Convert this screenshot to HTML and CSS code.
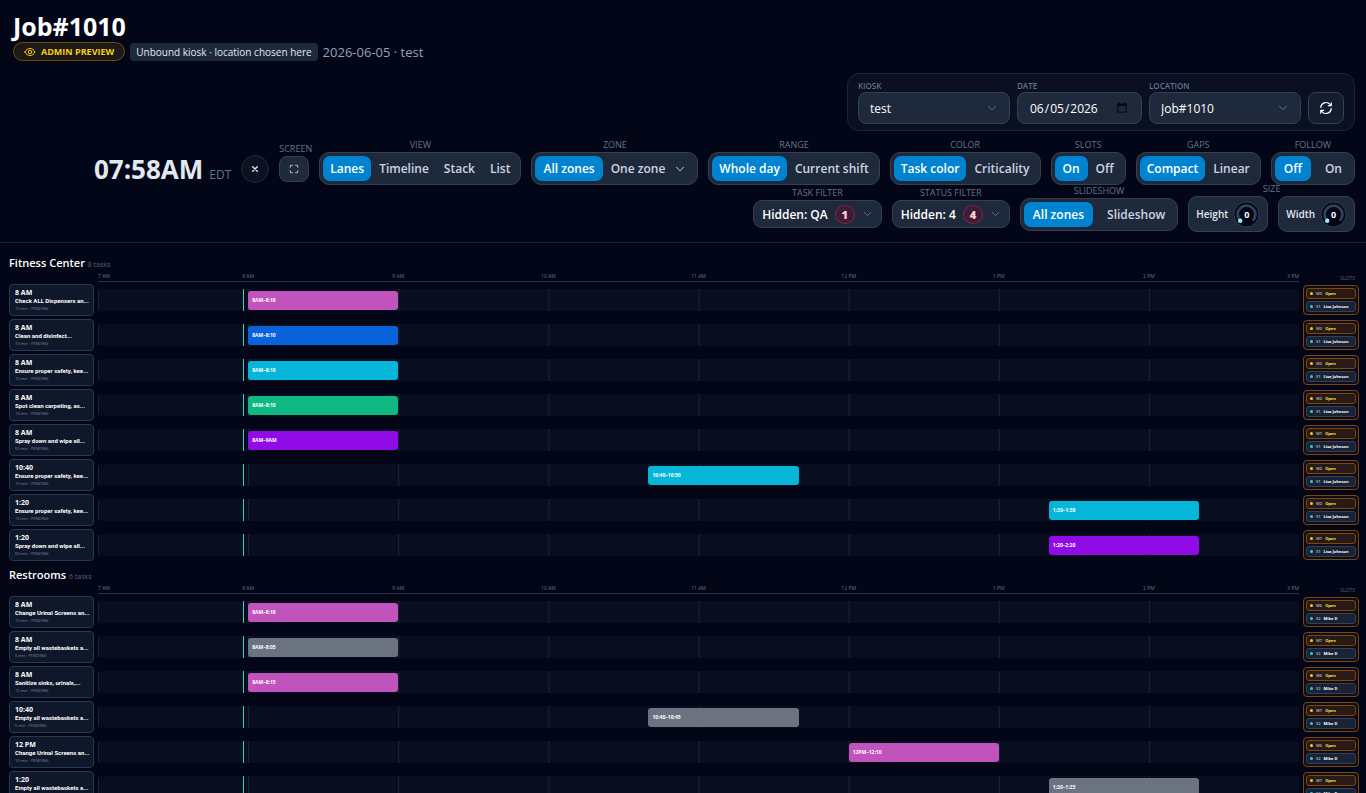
FILE: index.html
```html
<!DOCTYPE html>
<html lang="en">
<head>
    <meta charset="UTF-8">
    <meta name="viewport" content="width=device-width, initial-scale=1.0">
    <title>Job#1010 - Kiosk</title>
    <link rel="stylesheet" href="styles.css">
</head>
<body>

<header class="top">
    <h1>Job#1010</h1>
    <div class="meta">
        <span class="preview">
            <svg class="icon" viewBox="0 0 24 24"><path d="M2 12c2-4.500 6-7 10-7s8 2.500 10 7c-2 4.500-6 7-10 7s-8-2.500-10-7z"/><circle cx="12" cy="12" r="3.500"/></svg>
            ADMIN PREVIEW
        </span>
        <span class="tag">Unbound kiosk · location chosen here</span>
        <span class="when">2026-06-05 · test</span>
    </div>

    <form class="picker">
        <div class="field">
            <label for="kiosk">KIOSK</label>
            <div class="select">
                <select id="kiosk"><option>test</option></select>
                <svg class="icon" viewBox="0 0 24 24"><path d="M5 8.500l7 7 7-7"/></svg>
            </div>
        </div>
        <div class="field field-date">
            <label for="date">DATE</label>
            <input type="date" id="date" value="2026-06-05">
        </div>
        <div class="field">
            <label for="location">LOCATION</label>
            <div class="select">
                <select id="location"><option>Job#1010</option></select>
                <svg class="icon" viewBox="0 0 24 24"><path d="M5 8.500l7 7 7-7"/></svg>
            </div>
        </div>
        <button type="button" class="refresh" aria-label="Refresh">
            <svg class="icon" viewBox="0 0 24 24"><path d="M3 11a9 9 0 0 1 15.500-5.500L21 8M21 3v5h-5M21 13a9 9 0 0 1-15.500 5.500L3 16M3 21v-5h5"/></svg>
        </button>
    </form>

    <div class="toolbar">
        <div class="clock">07:58AM <small>EDT</small></div>
        <button class="close" aria-label="Close">
            <svg class="icon" viewBox="0 0 24 24"><path d="M5 5l14 14M19 5L5 19"/></svg>
        </button>
        <div class="group group-screen">
            <span class="caption">SCREEN</span>
            <button class="screen" aria-label="Full screen">
                <svg class="icon" viewBox="0 0 24 24"><path d="M3 8V5a2 2 0 0 1 2-2h3M16 3h3a2 2 0 0 1 2 2v3M21 16v3a2 2 0 0 1-2 2h-3M8 21H5a2 2 0 0 1-2-2v-3"/></svg>
            </button>
        </div>
        <div class="group">
            <span class="caption">VIEW</span>
            <div class="seg seg-tight"><button class="on">Lanes</button><button>Timeline</button><button>Stack</button><button>List</button></div>
        </div>
        <div class="group">
            <span class="caption">ZONE</span>
            <div class="seg">
                <button class="on">All zones</button>
                <button class="drop">One zone <svg class="icon" viewBox="0 0 24 24"><path d="M5 8.500l7 7 7-7"/></svg></button>
            </div>
        </div>
        <div class="group">
            <span class="caption">RANGE</span>
            <div class="seg seg-tight"><button class="on">Whole day</button><button>Current shift</button></div>
        </div>
        <div class="group">
            <span class="caption">COLOR</span>
            <div class="seg seg-tight"><button class="on">Task color</button><button>Criticality</button></div>
        </div>
        <div class="group">
            <span class="caption">SLOTS</span>
            <div class="seg"><button class="on">On</button><button>Off</button></div>
        </div>
        <div class="group">
            <span class="caption">GAPS</span>
            <div class="seg seg-tight"><button class="on">Compact</button><button>Linear</button></div>
        </div>
        <div class="group">
            <span class="caption">FOLLOW</span>
            <div class="seg seg-wide"><button class="on">Off</button><button>On</button></div>
        </div>
    </div>

    <div class="toolbar toolbar-second">
        <div class="group">
            <span class="caption">TASK FILTER</span>
            <button class="filter">Hidden: QA <b>1</b><svg class="icon" viewBox="0 0 24 24"><path d="M5 8.500l7 7 7-7"/></svg></button>
        </div>
        <div class="group">
            <span class="caption">STATUS FILTER</span>
            <button class="filter">Hidden: 4 <b>4</b><svg class="icon" viewBox="0 0 24 24"><path d="M5 8.500l7 7 7-7"/></svg></button>
        </div>
        <div class="group">
            <span class="caption">SLIDESHOW</span>
            <div class="seg seg-wide"><button class="on">All zones</button><button>Slideshow</button></div>
        </div>
        <div class="group">
            <span class="caption">SIZE</span>
            <div class="sizes">
                <label class="size">Height
                    <span class="knob">
                        <svg viewBox="0 0 28 28"><circle class="rim" cx="14" cy="14" r="13"/><path class="arc" d="M7.500 20.500a9.200 9.200 0 1 1 13 0"/><circle class="dot" cx="7.500" cy="20.500" r="2.300"/></svg>
                        <span>0</span>
                        <input type="range" min="0" max="10" value="0">
                    </span>
                </label>
                <label class="size">Width
                    <span class="knob">
                        <svg viewBox="0 0 28 28"><circle class="rim" cx="14" cy="14" r="13"/><path class="arc" d="M7.500 20.500a9.200 9.200 0 1 1 13 0"/><circle class="dot" cx="7.500" cy="20.500" r="2.300"/></svg>
                        <span>0</span>
                        <input type="range" min="0" max="10" value="0">
                    </span>
                </label>
            </div>
        </div>
    </div>
</header>

<main class="board">
    <section class="zone">
        <h2>Fitness Center <small>8 tasks</small></h2>
        <div class="lane lane-head">
            <div class="axis"><span>7 AM</span><span>8 AM</span><span>9 AM</span><span>10 AM</span><span>11 AM</span><span>12 PM</span><span>1 PM</span><span>2 PM</span><span>3 PM</span></div>
            <span class="slots-title">SLOTS</span>
        </div>
        <div class="lane">
            <div class="card"><b>8 AM</b><strong>Check ALL Dispensers an...</strong><small>10 min · PENDING</small></div>
            <div class="track"><div class="bar pink" style="margin-left: 12.5%">8AM–8:10</div></div>
            <div class="slots"><div class="slot open"><i>W3</i>Open</div><div class="slot"><i>S1</i>Lisa Johnson</div></div>
        </div>
        <div class="lane">
            <div class="card"><b>8 AM</b><strong>Clean and disinfect...</strong><small>10 min · PENDING</small></div>
            <div class="track"><div class="bar blue" style="margin-left: 12.5%">8AM–8:10</div></div>
            <div class="slots"><div class="slot open"><i>W3</i>Open</div><div class="slot"><i>S1</i>Lisa Johnson</div></div>
        </div>
        <div class="lane">
            <div class="card"><b>8 AM</b><strong>Ensure proper safety, kee...</strong><small>10 min · PENDING</small></div>
            <div class="track"><div class="bar cyan" style="margin-left: 12.5%">8AM–8:10</div></div>
            <div class="slots"><div class="slot open"><i>W2</i>Open</div><div class="slot"><i>S1</i>Lisa Johnson</div></div>
        </div>
        <div class="lane">
            <div class="card"><b>8 AM</b><strong>Spot clean carpeting, as...</strong><small>10 min · PENDING</small></div>
            <div class="track"><div class="bar green" style="margin-left: 12.5%">8AM–8:10</div></div>
            <div class="slots"><div class="slot open"><i>W2</i>Open</div><div class="slot"><i>S1</i>Lisa Johnson</div></div>
        </div>
        <div class="lane">
            <div class="card"><b>8 AM</b><strong>Spray down and wipe all...</strong><small>60 min · PENDING</small></div>
            <div class="track"><div class="bar purple" style="margin-left: 12.5%">8AM–9AM</div></div>
            <div class="slots"><div class="slot open"><i>W1</i>Open</div><div class="slot"><i>S1</i>Lisa Johnson</div></div>
        </div>
        <div class="lane">
            <div class="card"><b>10:40</b><strong>Ensure proper safety, kee...</strong><small>10 min · PENDING</small></div>
            <div class="track"><div class="bar cyan" style="margin-left: 45.83%">10:40–10:50</div></div>
            <div class="slots"><div class="slot open"><i>W2</i>Open</div><div class="slot"><i>S1</i>Lisa Johnson</div></div>
        </div>
        <div class="lane">
            <div class="card"><b>1:20</b><strong>Ensure proper safety, kee...</strong><small>10 min · PENDING</small></div>
            <div class="track"><div class="bar cyan" style="margin-left: 79.17%">1:20–1:30</div></div>
            <div class="slots"><div class="slot open"><i>W2</i>Open</div><div class="slot"><i>S1</i>Lisa Johnson</div></div>
        </div>
        <div class="lane">
            <div class="card"><b>1:20</b><strong>Spray down and wipe all...</strong><small>60 min · PENDING</small></div>
            <div class="track"><div class="bar purple" style="margin-left: 79.17%">1:20–2:20</div></div>
            <div class="slots"><div class="slot open"><i>W1</i>Open</div><div class="slot"><i>S1</i>Lisa Johnson</div></div>
        </div>
    </section>

    <section class="zone">
        <h2>Restrooms <small>6 tasks</small></h2>
        <div class="lane lane-head">
            <div class="axis"><span>7 AM</span><span>8 AM</span><span>9 AM</span><span>10 AM</span><span>11 AM</span><span>12 PM</span><span>1 PM</span><span>2 PM</span><span>3 PM</span></div>
            <span class="slots-title">SLOTS</span>
        </div>
        <div class="lane">
            <div class="card"><b>8 AM</b><strong>Change Urinal Screens an...</strong><small>10 min · PENDING</small></div>
            <div class="track"><div class="bar pink" style="margin-left: 12.5%">8AM–8:10</div></div>
            <div class="slots"><div class="slot open"><i>W6</i>Open</div><div class="slot"><i>S2</i>Mike D</div></div>
        </div>
        <div class="lane">
            <div class="card"><b>8 AM</b><strong>Empty all wastebaskets a...</strong><small>5 min · PENDING</small></div>
            <div class="track"><div class="bar gray" style="margin-left: 12.5%">8AM–8:05</div></div>
            <div class="slots"><div class="slot open"><i>W7</i>Open</div><div class="slot"><i>S2</i>Mike D</div></div>
        </div>
        <div class="lane">
            <div class="card"><b>8 AM</b><strong>Sanitize sinks, urinals,...</strong><small>15 min · PENDING</small></div>
            <div class="track"><div class="bar pink" style="margin-left: 12.5%">8AM–8:15</div></div>
            <div class="slots"><div class="slot open"><i>W6</i>Open</div><div class="slot"><i>S2</i>Mike D</div></div>
        </div>
        <div class="lane">
            <div class="card"><b>10:40</b><strong>Empty all wastebaskets a...</strong><small>5 min · PENDING</small></div>
            <div class="track"><div class="bar gray" style="margin-left: 45.83%">10:40–10:45</div></div>
            <div class="slots"><div class="slot open"><i>W7</i>Open</div><div class="slot"><i>S2</i>Mike D</div></div>
        </div>
        <div class="lane">
            <div class="card"><b>12 PM</b><strong>Change Urinal Screens an...</strong><small>10 min · PENDING</small></div>
            <div class="track"><div class="bar pink" style="margin-left: 62.5%">12PM–12:10</div></div>
            <div class="slots"><div class="slot open"><i>W6</i>Open</div><div class="slot"><i>S2</i>Mike D</div></div>
        </div>
        <div class="lane">
            <div class="card"><b>1:20</b><strong>Empty all wastebaskets a...</strong><small>5 min · PENDING</small></div>
            <div class="track"><div class="bar gray" style="margin-left: 79.17%">1:20–1:25</div></div>
            <div class="slots"><div class="slot open"><i>W7</i>Open</div><div class="slot"><i>S2</i>Mike D</div></div>
        </div>
    </section>
</main>

</body>
</html>
```
FILE: styles.css
```css
:root {
    --bg: #020617;
    --card: #0f172a;
    --control: #1e293b;
    --line: #334155;
    --muted: #64748b;
    --text: #e2e8f0;
    --primary: #0084d1;
}
* {
    box-sizing: border-box;
}
body {
    margin: 0;
    height: 100vh;
    display: flex;
    flex-direction: column;
    overflow: hidden;
    font-family: "Segoe UI", "Open Sans", sans-serif;
    font-size: 12px;
    background: var(--bg);
    color: var(--text);
}
button, select, input {
    font: inherit;
    color: inherit;
    margin: 0;
}
button {
    cursor: pointer;
    white-space: nowrap;
}
.icon {
    width: 12px;
    height: 12px;
    fill: none;
    stroke: currentColor;
    stroke-width: 2;
    stroke-linecap: round;
    stroke-linejoin: round;
}

/* header */
.top {
    flex: none;
    padding: 11px 11px 0 13px;
    border-bottom: 1px solid #1b2437;
}
h1 {
    margin: 0;
    font-size: 25px;
    line-height: 30px;
    color: #fff;
}
.meta {
    display: flex;
    align-items: center;
    gap: 5px;
    height: 21px;
}
.preview {
    display: flex;
    align-items: center;
    gap: 5px;
    height: 19px;
    padding: 0 10px;
    border: 1px solid #6b4d0c;
    border-radius: 10px;
    background: #1c1917;
    color: #facc15;
    font-size: 9px;
    font-weight: 700;
}
.tag {
    padding: 0 6px;
    border-radius: 4px;
    background: var(--control);
    font-size: 10px;
    line-height: 18px;
}
.when {
    font-size: 13px;
    color: #94a3b8;
}
.picker {
    display: flex;
    align-items: flex-end;
    gap: 7px;
    width: fit-content;
    margin: 11px 0 0 auto;
    padding: 5px 10px 6px;
    border: 1px solid #1b2437;
    border-radius: 12px;
    background: #0a0f21;
}
.field {
    width: 152px;
}
.field-date {
    width: 125px;
}
.field label {
    display: block;
    font-size: 8px;
    font-weight: 600;
    line-height: 13px;
    color: var(--muted);
}
.field select, .field input, .refresh {
    height: 32px;
    border: 1px solid var(--line);
    border-radius: 8px;
    background: var(--control);
    color: #fff;
}
.field select, .field input {
    width: 100%;
    padding: 0 11px;
    font-weight: 500;
    appearance: none;
}
.select {
    display: grid;
    align-items: center;
}
.select > * {
    grid-area: 1 / 1;
}
.select .icon {
    justify-self: end;
    margin-right: 12px;
    color: var(--muted);
    pointer-events: none;
}
.refresh {
    width: 36px;
    padding: 0;
    background: #141c30;
    display: grid;
    place-items: center;
}
.refresh .icon {
    width: 14px;
    height: 14px;
}

/* toolbar */
.toolbar {
    display: flex;
    justify-content: flex-end;
    align-items: center;
    gap: 10px;
    margin-top: 7px;
}
.toolbar-second {
    margin-top: -17px;
    margin-bottom: -4px;
}
.group {
    display: flex;
    flex-direction: column;
    align-items: center;
    padding-bottom: 14px;
}
.group-screen {
    width: 30px;
    align-items: flex-start;
}
.caption {
    font-size: 9px;
    font-weight: 500;
    line-height: 14px;
    color: var(--muted);
    white-space: nowrap;
}
.clock {
    display: flex;
    align-items: baseline;
    gap: 6px;
    font-size: 26px;
    font-weight: 700;
    white-space: nowrap;
}
.clock small {
    font-size: 12px;
    font-weight: 400;
    color: var(--muted);
}
.close {
    width: 28px;
    height: 28px;
    padding: 0;
    border: 1px solid #1f293b;
    border-radius: 50%;
    background: #0d1222;
    display: grid;
    place-items: center;
}
.close .icon {
    width: 8px;
    height: 8px;
    stroke-width: 4;
}
.screen {
    width: 30px;
    height: 26px;
    padding: 0;
    border: 1px solid var(--line);
    border-radius: 8px;
    background: var(--control);
    display: grid;
    place-items: center;
}
.screen .icon {
    width: 10px;
    height: 10px;
}
.seg {
    display: flex;
    padding: 3px;
    border: 1px solid var(--line);
    border-radius: 10px;
    background: var(--control);
}
.seg-tight {
    gap: 1px;
}
.seg-wide {
    gap: 5px;
}
.seg button {
    display: flex;
    align-items: center;
    gap: 9px;
    height: 25px;
    padding: 0 8px;
    border: none;
    border-radius: 7px;
    background: none;
    font-weight: 600;
    color: #cbd5e1;
}
.seg-tight button {
    padding: 0 7px;
}
.seg-wide button {
    padding: 0 9px;
}
.seg .on {
    background: var(--primary);
    color: #fff;
}
.filter {
    display: flex;
    align-items: center;
    gap: 7px;
    height: 28px;
    padding: 0 8px;
    border: 1px solid var(--line);
    border-radius: 9px;
    background: var(--control);
    font-weight: 600;
    color: #fff;
}
.filter b {
    width: 20px;
    height: 19px;
    border: 1px solid #7f2443;
    border-radius: 50%;
    background: #3c1d35;
    color: #fecdd3;
    font-size: 11px;
    line-height: 17px;
}
.filter .icon {
    width: 11px;
    color: var(--muted);
}
.sizes {
    display: flex;
    gap: 10px;
}
.size {
    display: flex;
    align-items: center;
    gap: 5px;
    height: 36px;
    padding: 0 7px;
    border: 1px solid var(--line);
    border-radius: 9px;
    background: var(--control);
    font-size: 10px;
    font-weight: 600;
}
.knob {
    display: grid;
    place-items: center;
    width: 27px;
    height: 27px;
}
.knob > * {
    grid-area: 1 / 1;
    width: 27px;
}
.knob span {
    font-size: 9px;
    font-weight: 700;
    text-align: center;
    color: #fff;
}
.knob input {
    opacity: 0;
}
.rim {
    fill: #020617;
    stroke: #334155;
}
.arc {
    fill: none;
    stroke: #334155;
    stroke-width: 3;
}
.dot {
    fill: #a5e8fd;
}

/* lanes */
.board {
    flex: 1;
    min-height: 0;
    overflow: auto;
    scrollbar-width: none;
    padding: 12px 7px 0 9px;
}
.zone {
    margin-bottom: 6px;
}
h2 {
    margin: 0;
    font-size: 11px;
    font-weight: 600;
    line-height: 15px;
    color: #fff;
}
h2 small {
    font-size: 7px;
    font-weight: 500;
    color: #56647a;
}
.lane {
    display: grid;
    grid-template-columns: 85px 1fr 56px;
    align-items: center;
    column-gap: 4px;
    margin-bottom: 3px;
}
.lane-head {
    align-items: end;
    height: 10px;
    margin-bottom: 2px;
}
.axis {
    grid-column: 2;
    display: grid;
    grid-template-columns: 1fr repeat(7, 2fr) 1fr;
    height: 10px;
    border-bottom: 1px solid #263349;
    font-size: 5px;
    line-height: 9px;
    text-align: center;
    color: var(--muted);
}
.axis span:first-child {
    text-align: left;
}
.axis span:last-child {
    text-align: right;
}
.slots-title {
    padding-right: 4px;
    font-size: 5px;
    line-height: 7px;
    text-align: right;
    color: #56647a;
}
.card {
    height: 32px;
    padding: 4px 0 0 5px;
    border: 1px solid #2a374c;
    border-radius: 4px;
    background: var(--card);
    white-space: nowrap;
}
.card b, .card strong, .card small {
    display: block;
}
.card b {
    font-size: 7px;
    line-height: 8px;
    color: #fff;
}
.card strong {
    font-family: "Segoe UI", Roboto, sans-serif;
    font-size: 6px;
    font-weight: 700;
    line-height: 8px;
    color: #fff;
}
.card small {
    font-size: 4px;
    line-height: 8px;
    color: #7c8aa0;
}
.track {
    position: relative;
    display: flex;
    align-items: center;
    height: 22px;
    border-radius: 3px;
    background: linear-gradient(90deg, #1c2537 1px, transparent 1px) 0 0 / 12.5% 100% #080d1f;
}
/* current time */
.track::before {
    content: "";
    position: absolute;
    left: 12.1%;
    width: 1px;
    height: 22px;
    background: #2dd4bf;
}
.bar {
    width: 12.5%;
    height: 19px;
    padding-left: 4px;
    border-radius: 3px;
    font-size: 5px;
    font-weight: 700;
    line-height: 19px;
    color: #fff;
}
.pink {
    background: #c154bc;
}
.blue {
    background: #0862da;
}
.cyan {
    background: #06b6d8;
}
.green {
    background: #10b981;
}
.purple {
    background: #900be6;
}
.gray {
    background: #6b7280;
}
.slots {
    display: grid;
    gap: 2px;
    padding: 2px;
    border: 1px solid #7a470d;
    border-radius: 4px;
    background: #110d18;
}
.slot {
    display: flex;
    align-items: center;
    gap: 3px;
    height: 11px;
    padding-left: 3px;
    border: 1px solid #334155;
    border-radius: 3px;
    background: #1a2236;
    font-size: 4px;
    font-weight: 700;
    white-space: nowrap;
    color: #fff;
}
.slot::before {
    content: "";
    width: 3px;
    height: 3px;
    border-radius: 50%;
    background: #2dd4bf;
}
.slot i {
    font-size: 4px;
    font-style: normal;
    color: #94a3b8;
}
.slot.open {
    border-color: #7a4a0c;
    background: #2a1a17;
    color: #fde047;
}
.slot.open::before {
    background: #facc15;
}
```
